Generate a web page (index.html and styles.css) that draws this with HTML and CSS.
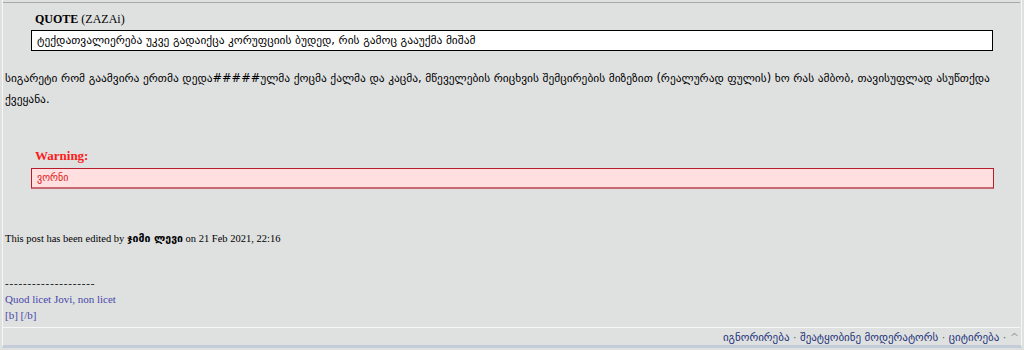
FILE: index.html
```html
<!DOCTYPE html>
<html>
<head>
<meta charset="utf-8">
<link rel="stylesheet" href="styles.css">
</head>
<body>
<div class="post">
  <div class="post-body">
    <div class="quote-title"><b>QUOTE</b> (ZAZAi)</div>
    <div class="quote-box">ტექდათვალიერება უკვე გადაიქცა კორუფციის ბუდედ, რის გამოც გააუქმა მიშამ</div>
    <p class="text">სიგარეტი რომ გაამვირა ერთმა დედა#####ულმა ქოცმა ქალმა და კაცმა, მწეველების რიცხვის შემცირების მიზეზით (რეალურად ფულის) ხო რას ამბობ, თავისუფლად ასუწთქდა ქვეყანა.</p>
    <div class="warn-title">Warning:</div>
    <div class="warn-box">ვორნი</div>
    <div class="edited">This post has been edited by <b class="geo">ჯიმი ლევი</b> on 21 Feb 2021, 22:16</div>
    <div class="sig">
      <div class="dash">--------------------</div>
      <div class="sig-line">Quod licet Jovi, non licet</div>
      <div class="sig-line">[b] [/b]</div>
    </div>
  </div>
  <div class="post-foot">
    <a class="lnk">იგნორირება</a><span class="dot"> · </span><a class="lnk">შეატყობინე მოდერატორს</a> <span class="dot"> · </span><a class="lnk">ციტირება</a><span class="dot"> · </span><span class="up">^</span>
  </div>
</div>
</body>
</html>
```
FILE: styles.css
```css
html, body {
  margin: 0;
  padding: 0;
  background: #dfe0e0;
}
body {
  padding: 0 2px 0 2px;
  height: 350px;
  box-sizing: border-box;
  overflow: hidden;
}
.post {
  border-left: 1px solid #f5f5f5;
  border-right: 1px solid #f5f5f5;
  border-bottom: 3px solid #c3ccd8;
  padding-top: 2px;
  height: 348px;
  box-sizing: border-box;
  display: flex;
  flex-direction: column;
}
.post-body {
  border-top: 1px solid #a8a8a8;
  border-bottom: 1px solid #f7f7f7;
  margin-right: 1px;
  padding: 8px 0 4px 2px;
  flex: 1;
  font-family: "DejaVu Sans", sans-serif;
  font-size: 11.4px;
  color: #000;
}
.quote-title {
  font-family: "Liberation Serif", serif;
  font-size: 12px;
  margin-left: 30px;
  height: 19px;
  line-height: 16px;
}
.quote-box {
  margin-left: 26px;
  width: 962px;
  box-sizing: border-box;
  background: #fff;
  border: 1px solid #000;
  height: 21px;
  line-height: 19px;
  padding-left: 5px;
}
.text {
  margin: 17px 0 0 0;
  line-height: 21px;
}
.warn-title {
  margin: 38px 0 0 30px;
  font-family: "Liberation Serif", serif;
  font-weight: bold;
  font-size: 13px;
  color: #ff1a1a;
  height: 20px;
  line-height: 16px;
}
.warn-box {
  margin-left: 26px;
  width: 963px;
  box-sizing: border-box;
  background: #ffdfdf;
  border: 1px solid #b81c2c;
  border-bottom: 2px solid #c86a74;
  height: 21px;
  line-height: 18px;
  padding-left: 5px;
  color: #e02020;
  font-size: 10px;
}
.edited {
  margin-top: 42px;
  font-family: "Liberation Serif", serif;
  font-size: 10.5px;
  line-height: 14px;
}
.edited .geo {
  font-family: "DejaVu Sans", sans-serif;
  font-size: 10.5px;
}
.sig {
  margin-top: 29px;
  font-family: "Liberation Serif", serif;
  font-size: 11px;
  line-height: 16px;
}
.dash {
  letter-spacing: 0.85px;
}
.sig-line {
  color: #4848a8;
}
.post-foot {
  height: 20px;
  line-height: 20px;
  text-align: right;
  padding-right: 2px;
  font-family: "DejaVu Sans", sans-serif;
  font-size: 11px;
}
.lnk {
  color: #22337a;
}
.dot {
  color: #4a7a4a;
}
.up {
  color: #a0a0a0;
}
```
